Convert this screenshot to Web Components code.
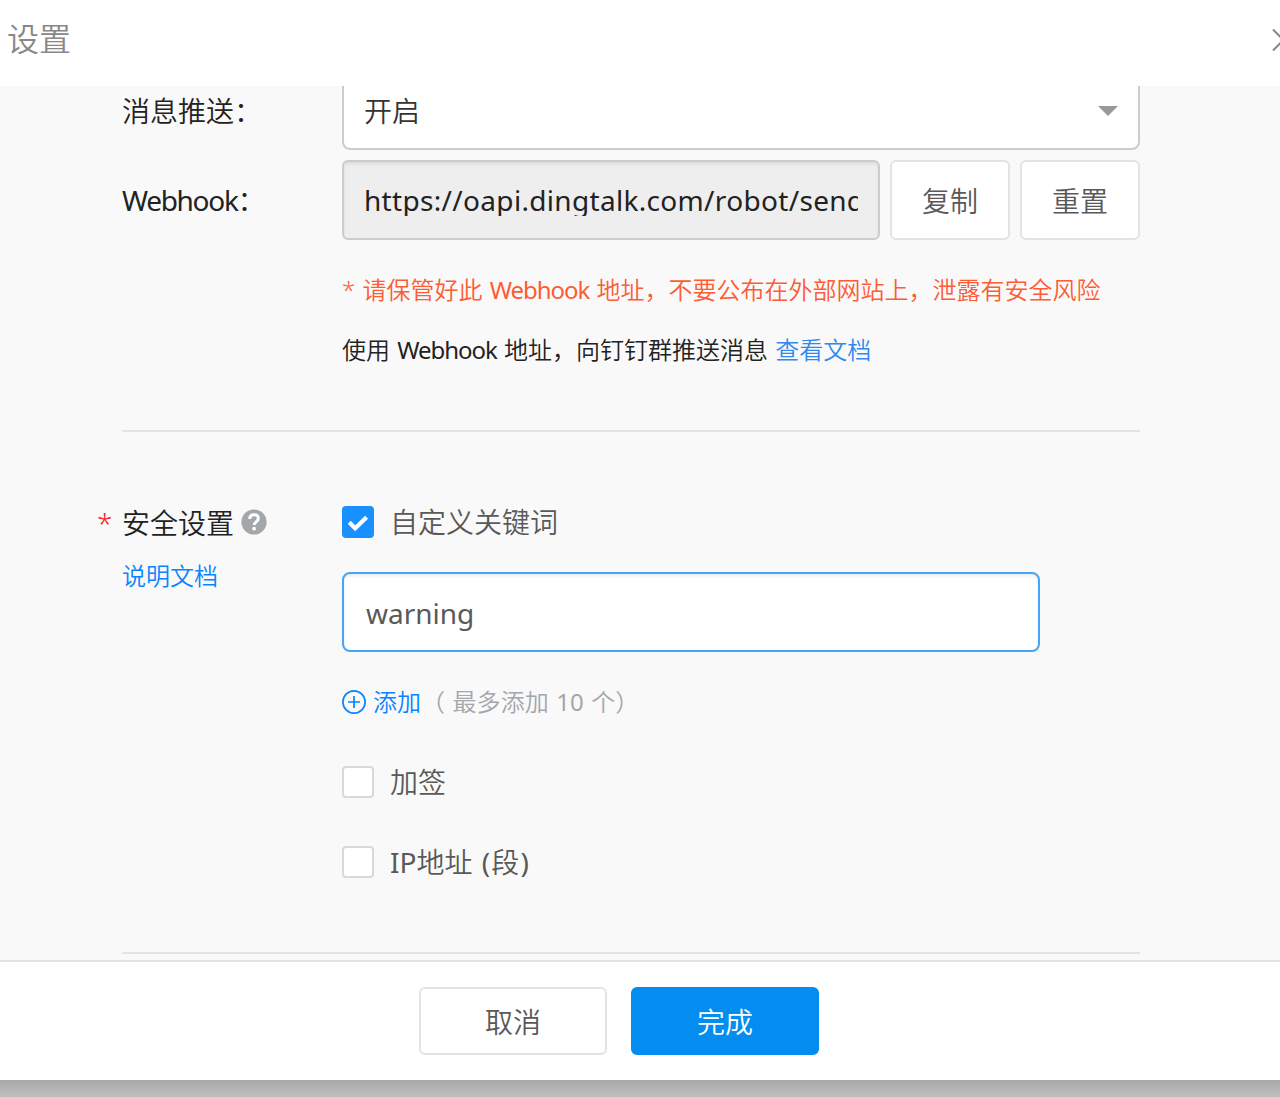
<!DOCTYPE html>
<html lang="zh-CN">
<head>
<meta charset="utf-8">
<title>设置</title>
<style>
html,body{margin:0;height:100%;overflow:hidden}
body{font-family:"Noto Sans","Noto Sans CJK SC",sans-serif;font-size:28px;font-weight:350;color:#222;background:linear-gradient(#a8a8a8 1080px,#bdbdbd 1095px)}
</style>
</head>
<body>
<settings-dialog></settings-dialog>
<script>
const define = (name, html) => {
  const template = document.createElement('template');
  template.innerHTML = html;
  customElements.define(name, class extends HTMLElement {
    constructor() {
      super();
      this.attachShadow({mode: 'open'}).append(template.content.cloneNode(true));
    }
  });
};

define('ui-button', `<style>
:host{display:flex;box-sizing:border-box;align-items:center;justify-content:center;width:120px;height:80px;border:2px solid #e3e3e3;border-radius:6px;background:#fff;color:#595959;line-height:40px;padding-top:2px}
:host([size=footer]){width:188px;height:68px}
:host([primary]){background:#038df1;border-color:#038df1;color:#fff}
</style><slot></slot>`);

define('ui-input', `<style>
:host{display:flex;box-sizing:border-box;align-items:center;width:698px;height:80px;padding:2px 22px 0;border:2px solid #45a5f7;border-radius:8px;background:#fff;color:#595959;font-weight:400;box-shadow:inset 0 2px 3px rgba(0,0,0,.08)}
:host([readonly]){width:538px;padding:2px 20px 0;border-color:#ccc;border-radius:6px;background:#eee;color:#222}
div{flex:1;min-width:0;overflow:hidden;white-space:nowrap;line-height:40px;letter-spacing:var(--track,0)}
:host([readonly]) div{height:30px;line-height:28px}
</style><div><slot></slot></div>`);

define('ui-select', `<style>
:host{display:flex;box-sizing:border-box;align-items:center;justify-content:space-between;width:798px;height:80px;padding:2px 20px 0;border:2px solid #ccc;border-radius:8px;background:#fff;color:#333;line-height:40px}
</style><span><slot></slot></span><svg width="20" height="10"><path d="M0 0H20L10 10Z" fill="#999"/></svg>`);

define('ui-checkbox', `<style>
:host{display:flex;align-items:center;gap:16px;height:40px;color:#595959;line-height:40px}
i{box-sizing:border-box;width:32px;height:32px;border:2px solid #d9d9d9;border-radius:4px;background:#fff}
svg{display:none}
:host([checked]) i{border-color:#1890ff;background:#1890ff}
:host([checked]) svg{display:block;margin:-2px}
</style><i><svg width="32" height="32"><path d="M7.2 16.2 13.2 22.3 24.6 11.3" fill="none" stroke="#fff" stroke-width="4.2"/></svg></i><span><slot></slot></span>`);

define('form-row', `<style>
:host{display:flex;align-items:flex-start}
.label{flex:none;width:220px}
.field{flex:1;min-width:0}
</style><div class="label"><slot name="label"></slot></div><div class="field"><slot></slot></div>`);

define('help-icon', `<style>:host,svg{display:block}</style>
<svg width="26" height="26" viewBox="0 0 26 26"><circle cx="13" cy="13" r="12.6" fill="#a2a7ab"/><path d="M8.7 10.1C8.7 7.2 10.5 5.7 13.1 5.7S17.3 7.2 17.3 9.6C17.3 12.5 13.2 12.7 13.2 16.1" fill="none" stroke="#fff" stroke-width="3"/><circle cx="13.1" cy="19.7" r="1.9" fill="#fff"/></svg>`);

define('add-keyword', `<style>
:host{display:flex;align-items:center;height:40px;font-size:24px;line-height:40px;color:#a2a7ab}
svg{display:block;margin-right:7px}
a{color:#0a84ff}
.note{word-spacing:1px;letter-spacing:.1px}
.latin{font-weight:400}
</style><svg width="24" height="24" fill="none" stroke="#0a84ff" stroke-width="1.7"><circle cx="12" cy="12" r="11.1"/><path d="M6 12H18M12 6V18"/></svg><a>添加</a><span class="note">（ 最多添加 <span class="latin">10</span> 个）</span>`);

define('dialog-header', `<style>
:host{display:flex;box-sizing:border-box;align-items:center;justify-content:space-between;height:86px;padding:0 0 12px 7px;background:#fff;font-size:32px;color:#888;overflow:hidden}
span{margin-top:-1px}
svg{display:block;flex:none;margin-top:5px}
</style><span><slot></slot></span><svg width="8" height="24"><path d="M1 1.5 22 22.5M22 1.5 1 22.5" fill="none" stroke="#888" stroke-width="2"/></svg>`);

define('dialog-footer', `<style>
:host{display:flex;box-sizing:border-box;align-items:flex-start;gap:24px;height:120px;padding:25px 0 0 419px;border-top:2px solid #e3e3e3;background:#fff}
</style><slot></slot>`);

define('settings-dialog', `<style>
:host{display:flex;flex-direction:column;height:1080px}
main{height:874px;overflow:hidden;background:#f9f9f9}
.form{display:flex;flex-direction:column;margin:-16px 0 0 122px;width:1018px}
.label{line-height:40px;white-space:nowrap;padding-top:21px}
.latin{font-weight:400}
.web{letter-spacing:-1.3px;font-weight:400}
.webhook{margin-top:10px}
.webhook .label{padding-top:20px}
.line{display:flex;gap:10px}
p{margin:0;font-size:24px;line-height:60px;height:60px;white-space:nowrap;word-spacing:1px}
p .web{letter-spacing:-1.05px}
.warn{margin-top:20px;color:#fd5c35}
a{color:#3089ee}
hr{width:100%;height:2px;margin:50px 0 0;border:0;background:#e3e3e3;flex:none}
hr.end{margin-top:70px}
.security{margin-top:70px}
.title{display:flex;align-items:center;height:40px;line-height:40px;margin-left:-25px;padding-top:1px}
.star{width:25px;color:#f5222d}
help-icon{margin:-2px 0 0 7px}
.doc{display:block;font-size:24px;line-height:40px;margin-top:13px;color:#0a84ff}
.stack{display:flex;flex-direction:column}
.stack ui-input{margin:30px 0}
.stack ui-checkbox + ui-checkbox{margin-top:40px}
.paren{letter-spacing:1.2px;margin-left:2px}
add-keyword{margin-bottom:40px}
</style>
<dialog-header>设置</dialog-header>
<main><div class="form">
<form-row><div slot="label" class="label">消息推送：</div><ui-select>开启</ui-select></form-row>
<form-row class="webhook"><div slot="label" class="label"><span class="web">Webhook</span>：</div>
<div class="line"><ui-input readonly style="--track:.32px">https://oapi.dingtalk.com/robot/send</ui-input><ui-button>复制</ui-button><ui-button>重置</ui-button></div>
<p class="warn">* 请保管好此 <span class="web">Webhook</span> 地址，不要公布在外部网站上，泄露有安全风险</p>
<p class="use">使用 <span class="web">Webhook</span> 地址，向钉钉群推送消息 <a>查看文档</a></p></form-row>
<hr>
<form-row class="security"><div slot="label"><div class="title"><span class="star">*</span>安全设置<help-icon></help-icon></div><a class="doc">说明文档</a></div>
<div class="stack"><ui-checkbox checked>自定义关键词</ui-checkbox><ui-input>warning</ui-input><add-keyword></add-keyword><ui-checkbox>加签</ui-checkbox><ui-checkbox><span class="latin">IP</span>地址 <span class="paren"><span class="latin">(</span>段<span class="latin">)</span></span></ui-checkbox></div></form-row>
<hr class="end">
</div></main>
<dialog-footer><ui-button size="footer">取消</ui-button><ui-button size="footer" primary>完成</ui-button></dialog-footer>`);
</script>
</body>
</html>
